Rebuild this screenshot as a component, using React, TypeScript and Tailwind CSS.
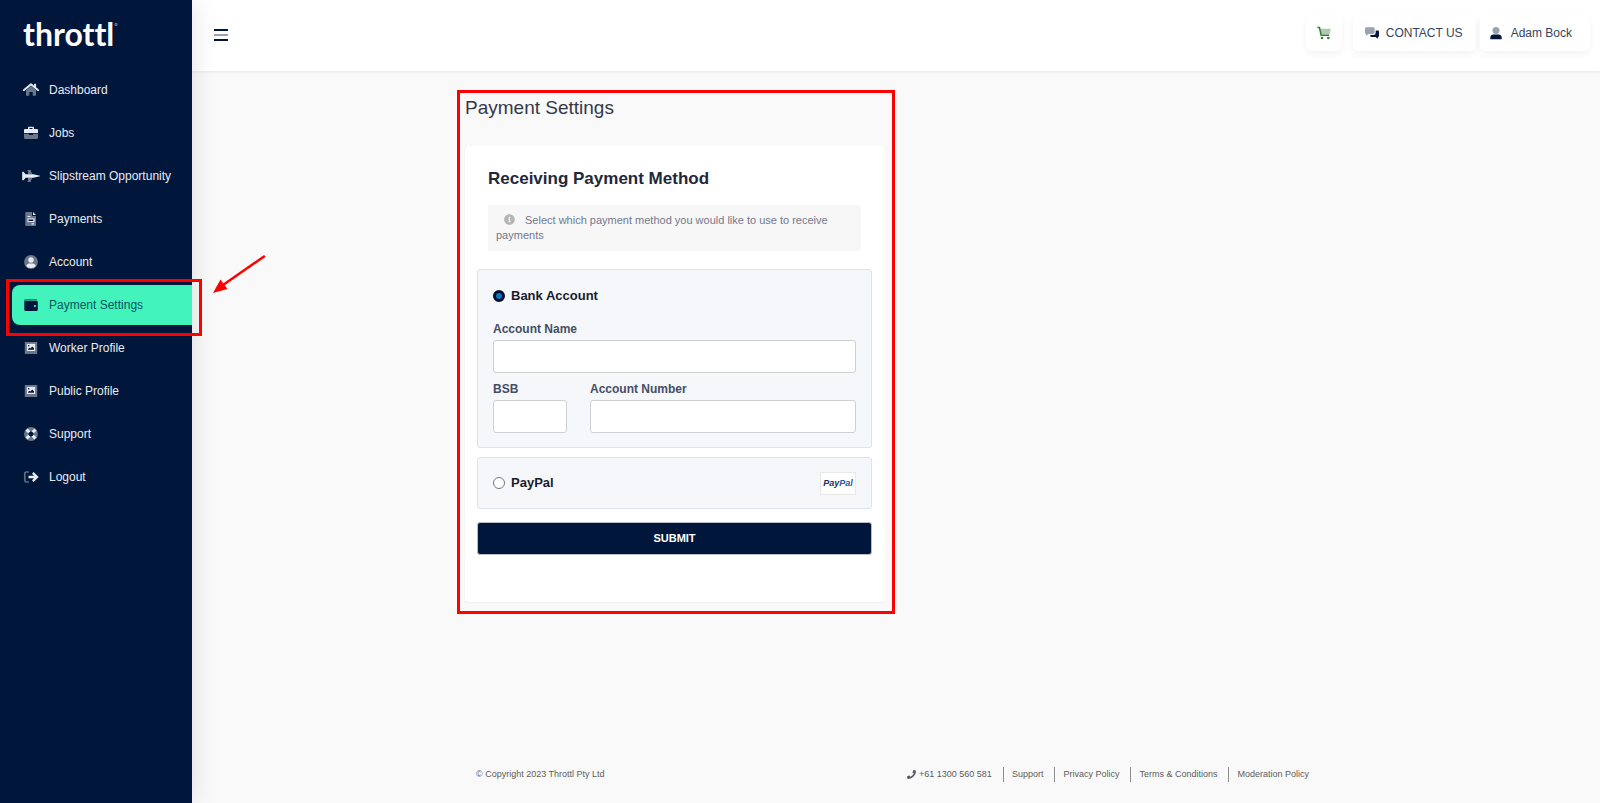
import type { ReactNode } from "react";
import { FaInfoCircle, FaPhone } from "react-icons/fa";
import { clsx } from "clsx";

interface IconProps {
  children: ReactNode;
  className?: string;
}

// Two-tone icons: the faded part uses half opacity of the current colour
const Icon = ({ children, className }: IconProps) => (
  <svg viewBox="0 0 18 16" fill="currentColor" aria-hidden="true" className={clsx("shrink-0", className ?? "h-4 w-[18px]")}>
    {children}
  </svg>
);

const HomeIcon = () => (
  <Icon>
    <path opacity=".45" d="M4 8.200 9 4l5 4.200V13a.7.700 0 0 1-.7.700h-2.600V10H7.300v3.700H4.700A.7.700 0 0 1 4 13z" />
    <path d="M12.100 1.800h2v4h-2z" />
    <path d="M1.800 8.200 9 2.200l7.200 6" fill="none" stroke="currentColor" strokeWidth="1.900" strokeLinecap="round" strokeLinejoin="round" />
  </Icon>
);

const BriefcaseIcon = () => (
  <Icon>
    <path opacity=".45" d="M2 8.800h5v.6c0 .3.2.6.6.6h2.800c.4 0 .6-.3.6-.6v-.6h5v4c0 .7-.5 1.200-1.200 1.200H3.200c-.7 0-1.200-.5-1.200-1.200z" />
    <path fillRule="evenodd" d="M6 4V3c0-.8.6-1.300 1.300-1.300h3.400c.7 0 1.300.5 1.300 1.300v1h2.800c.7 0 1.200.5 1.200 1.200v2.900H2V5.200C2 4.500 2.500 4 3.200 4zm1.500 0h3v-.9h-3z" />
  </Icon>
);

const JetIcon = () => (
  <Icon>
    <path opacity=".45" d="M5.500 2h3.500v1H8.600l2 3.200H6V3h-.5zM6 9.800h4.600L8.600 13H9v1H5.500v-1H6z" />
    <path d="M.2 3.800h1.300l2.200 2.400h7.500L18 7.700v.6l-6.800 1.500H3.700l-2.200 2.400H.2z" />
  </Icon>
);

const InvoiceIcon = () => (
  <Icon>
    <path opacity=".45" fillRule="evenodd" d="M4.300 1h5.700v4h4v9c0 .6-.4 1-1 1H4.300c-.6 0-1-.4-1-1V2c0-.6.4-1 1-1zm1 6.500v3.500H12V7.500z" />
    <path d="M11 1v3h3zM5.500 5h3v1h-3zM9.500 12.300H12v1.100H9.500z" />
    <path d="M5.900 7.800h6v2.700h-6z" fill="none" stroke="currentColor" strokeWidth="1.200" />
  </Icon>
);

const AccountIcon = () => (
  <Icon>
    <circle opacity=".45" cx="9" cy="8" r="6.900" />
    <circle cx="9" cy="6" r="2.700" />
    <path d="M4.200 11.900c.4-1.500 1.600-2.400 3-2.400h3.600c1.400 0 2.600.9 3 2.400a6.400 6.400 0 0 1-9.600 0z" />
  </Icon>
);

const WalletIcon = () => (
  <Icon>
    <path opacity=".5" d="M3.500 2H14c.6 0 1 .4 1 1v.8H2.300v-.6C2.300 2.500 2.800 2 3.500 2z" />
    <path fillRule="evenodd" d="M2.300 3.200c.2.500.7.900 1.400.9h11c.7 0 1.100.5 1.100 1.100v7.500c0 .7-.5 1.200-1.200 1.200H3.500c-.7 0-1.200-.5-1.200-1.200zM13 7.900a1.100 1.100 0 1 0 0 2.200 1.100 1.100 0 0 0 0-2.200z" />
  </Icon>
);

const PictureIcon = () => (
  <Icon>
    <path opacity=".45" fillRule="evenodd" d="M2.800 2h12.400v12H2.800zM4.700 3.700v7.300h8.600V3.700z" />
    <path fillRule="evenodd" d="M4.700 3.700h8.600v7.300H4.700zM6 9.700h6V8.200L10.200 6.500 8.300 8.400l-.8-.7L6 9zM6.700 5a.8.800 0 1 0 0 1.600.8.800 0 0 0 0-1.600z" />
  </Icon>
);

const LifeRingIcon = () => (
  <Icon>
    <circle opacity=".45" cx="9" cy="8" r="4.700" fill="none" stroke="currentColor" strokeWidth="4.400" />
    <path d="M4.600 3.600 7.300 6.300M13.400 3.600 10.700 6.300M4.600 12.400 7.300 9.700M13.400 12.400 10.700 9.700" fill="none" stroke="currentColor" strokeWidth="3" />
  </Icon>
);

const LogoutIcon = () => (
  <Icon>
    <path opacity=".4" d="M7 3H4.300C3.400 3 2.800 3.600 2.800 4.500v7c0 .9.600 1.500 1.500 1.500H7" fill="none" stroke="currentColor" strokeWidth="1.700" />
    <path d="M6.500 8h8.500M10.800 3.900 15 8l-4.200 4.100" fill="none" stroke="currentColor" strokeWidth="2.300" />
  </Icon>
);

const CartIcon = () => (
  <Icon className="h-[14px] w-4 text-[#2f7d32]">
    <path opacity=".4" d="M4.500 3h12.300l-1.500 6.500H5.800z" />
    <path d="M1.500 1.800h2.300l1.900 8.800h9.200" fill="none" stroke="currentColor" strokeWidth="1.700" />
    <circle cx="6.700" cy="13.700" r="1.500" />
    <circle cx="13.900" cy="13.700" r="1.500" />
  </Icon>
);

const CommentsIcon = () => (
  <Icon className="h-[14px] w-4">
    <path opacity=".4" d="M2.500 1.500h8A1.500 1.500 0 0 1 12 3v4.500A1.500 1.500 0 0 1 10.500 9H5l-2.800 2V9A1.500 1.500 0 0 1 1 7.500V3a1.500 1.500 0 0 1 1.500-1.500z" />
    <path d="M13.200 5h2.300A1.500 1.500 0 0 1 17 6.500V11a1.500 1.500 0 0 1-1.200 1.500v2l-2.800-2H8.500A1.500 1.500 0 0 1 7 11v-.8h3.700a2.500 2.500 0 0 0 2.500-2.500z" />
  </Icon>
);

const UserIcon = () => (
  <Icon className="h-[14px] w-4">
    <circle opacity=".4" cx="9" cy="5" r="4" />
    <path d="M2.500 15v-1.500C2.500 11 4.300 9.800 6 9.800h6c1.700 0 3.500 1.200 3.500 3.700V15z" />
  </Icon>
);

const menu = [
  { label: "Dashboard", icon: HomeIcon },
  { label: "Jobs", icon: BriefcaseIcon },
  { label: "Slipstream Opportunity", icon: JetIcon },
  { label: "Payments", icon: InvoiceIcon },
  { label: "Account", icon: AccountIcon },
  { label: "Payment Settings", icon: WalletIcon, active: true },
  { label: "Worker Profile", icon: PictureIcon },
  { label: "Public Profile", icon: PictureIcon },
  { label: "Support", icon: LifeRingIcon },
  { label: "Logout", icon: LogoutIcon },
];

const footerLinks = ["Support", "Privacy Policy", "Terms & Conditions", "Moderation Policy"];

const Pointer = () => (
  <>
    <div className="pointer-events-none absolute -top-[6px] -right-[10px] -bottom-[11px] -left-[6px] border-3 border-[#fe0000]" />
    <svg viewBox="0 0 54 40" className="pointer-events-none absolute -top-[31px] left-[201px] h-10 w-[54px]" aria-hidden="true">
      <path d="M51 2.500 10 31" stroke="#fe0000" strokeWidth="2.500" strokeLinecap="round" />
      <path d="M0 39 7.500 25.500 14.500 35z" fill="#fe0000" />
    </svg>
  </>
);

const Sidebar = () => (
  <aside className="relative z-10 w-48 shrink-0 bg-[#00173b] shadow-[0_0_24px_rgba(0,0,0,0.12)]">
    <a href="#" className="flex h-[70px] items-start pt-[14px] pl-[23px] font-[Lato,sans-serif] text-[32px] leading-[40px] font-bold text-white [font-variant-ligatures:none]">
      throttl
      <span className="text-[8px] leading-[24px] text-white/60">°</span>
    </a>
    <nav>
      <ul className="flex flex-col gap-[3px] pl-3">
        {menu.map(({ label, icon: MenuIcon, active }) => (
          <li key={label} className="relative">
            <a
              href="#"
              className={clsx(
                "flex h-10 items-center gap-[9px] rounded-l-lg pl-[10px] text-[12px]",
                active ? "bg-[#42f4bc] text-[#00173b]" : "text-[#e8ebf0]"
              )}
            >
              <MenuIcon />
              <span className={active ? "text-[#0d5560]" : undefined}>{label}</span>
            </a>
            {active && <Pointer />}
          </li>
        ))}
      </ul>
    </nav>
  </aside>
);

const TopBar = () => {
  const button = "flex h-9 items-center rounded-md bg-white text-[12px] text-[#36435f] shadow-[0_3px_8px_rgba(0,0,0,0.05)]";

  return (
    <header className="flex h-[71px] items-start justify-between bg-white pr-[10px] pl-[22px] shadow-[0_1px_3px_rgba(0,0,0,0.07)]">
      <button type="button" aria-label="Toggle menu" className="mt-[29px] flex w-[14px] flex-col gap-[3px]">
        <span className="h-[2px] w-full bg-[#00173b]" />
        <span className="h-[2px] w-full bg-[#99a2b1]" />
        <span className="h-[2px] w-full bg-[#00173b]" />
      </button>
      <div className="flex pt-[15px]">
        <button type="button" aria-label="Cart" className={clsx(button, "mr-[11px] px-[10px]")}>
          <CartIcon />
        </button>
        <button type="button" className={clsx(button, "mr-1 gap-[6px] pr-[13px] pl-[11px]")}>
          <span className="text-[#00173b]"><CommentsIcon /></span>
          CONTACT US
        </button>
        <button type="button" className={clsx(button, "gap-[7px] pr-[18px] pl-2")}>
          <span className="text-[#00173b]"><UserIcon /></span>
          Adam Bock
        </button>
      </div>
    </header>
  );
};

interface TextFieldProps {
  id: string;
  label: string;
  className?: string;
}

const TextField = ({ id, label, className }: TextFieldProps) => (
  <div className={className}>
    <label htmlFor={id} className="block text-[12px] leading-[16px] font-bold text-[#454e66]">{label}</label>
    <input id={id} type="text" className="mt-[3px] block h-[33px] w-full rounded-[3px] border border-[#cfd0d3] bg-white px-2 text-[12px]" />
  </div>
);

const radio =
  "size-3 shrink-0 appearance-none rounded-full border border-[#767676] bg-white checked:border-3 checked:border-[#00102c] checked:bg-[#0b74c4]";

const PaymentCard = () => (
  <form className="rounded-[4px] bg-white pt-[21px] pr-[13px] pb-[47px] pl-3 shadow-[0_1px_2px_rgba(0,0,0,0.05)]" onSubmit={(e) => e.preventDefault()}>
    <div className="px-[11px]">
      <h2 className="text-[17px] leading-[24px] font-bold text-[#22273a]">Receiving Payment Method</h2>
      <p className="mt-[14px] bg-[#f7f7f7] px-2 py-2 text-[11px] leading-[15px] text-[#74788d]">
        <FaInfoCircle className="mr-[10px] ml-[8px] inline size-[11px] align-[-1px] text-[#b5b5b5]" />
        Select which payment method you would like to use to receive payments
      </p>
    </div>

    <div className="mt-[18px] rounded-[3px] border border-[#dbe3f0] bg-[#f5f7fb] px-[15px] pt-4 pb-[14px]">
      <label className="flex items-center gap-[6px] text-[13px] leading-[20px] font-bold text-[#191c2b]">
        <input type="radio" name="method" defaultChecked className={radio} />
        Bank Account
      </label>
      <TextField id="account-name" label="Account Name" className="mt-[15px]" />
      <div className="mt-2 flex gap-[23px]">
        <TextField id="bsb" label="BSB" className="w-[74px]" />
        <TextField id="account-number" label="Account Number" className="flex-1" />
      </div>
    </div>

    <div className="mt-[9px] flex h-[52px] items-center justify-between rounded-[3px] border border-[#dbe3f0] bg-[#f5f7fb] px-[15px]">
      <label className="flex items-center gap-[6px] text-[13px] leading-[20px] font-bold text-[#191c2b]">
        <input type="radio" name="method" className={radio} />
        PayPal
      </label>
      <span aria-hidden="true" className="flex h-[23px] w-9 items-center justify-center border border-[#e8e8e8] bg-white text-[9px] leading-none font-bold text-[#1b2f66] italic">
        Pay<span className="text-[#1f5c9e]">Pal</span>
      </span>
    </div>

    <button type="submit" className="mt-[13px] h-[33px] w-full rounded-[3px] border border-[#b9bdc6] bg-[#00173b] text-[11px] font-bold text-white">
      SUBMIT
    </button>
  </form>
);

const Footer = () => (
  <footer className="mx-auto mt-auto flex w-full max-w-[862px] items-center justify-between pr-[18px] pb-[21px] pl-[11px] text-[9px] leading-[15px] text-[#5c5c5c]">
    <span>© Copyright 2023 Throttl Pty Ltd</span>
    <nav className="flex">
      <a href="#" className="flex items-center gap-[3px] pr-[11px]">
        <FaPhone className="size-[9px]" />
        +61 1300 560 581
      </a>
      {footerLinks.map((link) => (
        <a key={link} href="#" className="border-l border-[#8c8c8c] pr-[11px] pl-2 last:pr-0">{link}</a>
      ))}
    </nav>
  </footer>
);

export default function App() {
  return (
    <div className="flex min-h-screen bg-[#f9f9f9] font-['Liberation_Sans',Arial,sans-serif]">
      <Sidebar />
      <div className="flex min-w-0 flex-1 flex-col">
        <TopBar />
        <main className="mx-auto w-full max-w-[862px] pt-[25px] pb-8">
          <section className="relative w-[420px] max-w-full">
            <h1 className="pb-[26px] text-[19px] leading-[24px] text-[#343849]">Payment Settings</h1>
            <PaymentCard />
            <div className="pointer-events-none absolute -top-[6px] -right-[10px] -bottom-[12px] -left-2 border-3 border-[#fe0000]" />
          </section>
        </main>
        <Footer />
      </div>
    </div>
  );
}
